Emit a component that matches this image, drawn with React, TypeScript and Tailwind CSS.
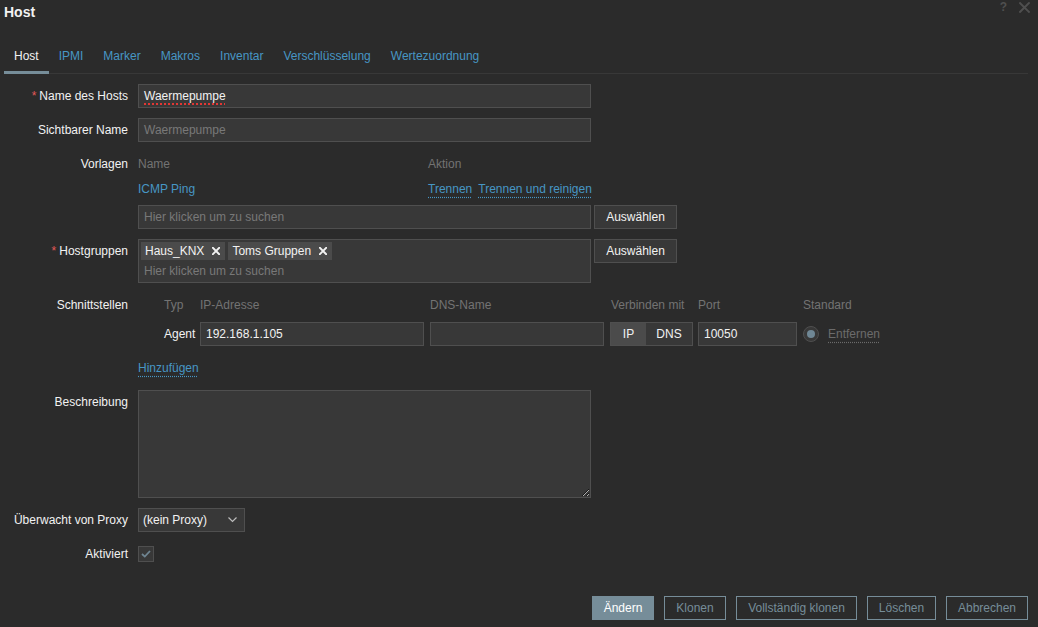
import React from "react";

const tabs = ["Host", "IPMI", "Marker", "Makros", "Inventar", "Verschlüsselung", "Wertezuordnung"];

const XIcon = ({ size = 7, stroke = 2, color = "#f2f2f2" }: { size?: number; stroke?: number; color?: string }) => (
  <svg width={size} height={size} viewBox="0 0 10 10" fill="none">
    <path d="M1 1L9 9M9 1L1 9" stroke={color} strokeWidth={stroke} strokeLinecap="square" />
  </svg>
);

const Label: React.FC<{ text?: string; required?: boolean; h?: string }> = ({ text, required, h = "h-[24px] leading-[24px]" }) => (
  <div className={`w-[124px] shrink-0 text-right text-[#f2f2f2] ${h}`}>
    {required && <span className="text-[#e45959] mr-[3px]">*</span>}
    {text}
  </div>
);

const Row: React.FC<{ children: React.ReactNode; className?: string }> = ({ children, className = "" }) => (
  <div className={`flex gap-[10px] ${className}`}>{children}</div>
);

const TextBox: React.FC<{ value: string; className?: string; muted?: boolean; spell?: boolean }> = ({ value, className = "", muted, spell }) => (
  <div
    className={`h-[24px] bg-[#383838] border border-[#4f4f4f] px-[5px] leading-[22px] ${muted ? "text-[#787878]" : "text-[#f2f2f2]"} ${className}`}
  >
    {spell ? <span className="underline decoration-dotted decoration-[#e33734] decoration-[1.5px] underline-offset-[3px]">{value}</span> : value}
  </div>
);

const GreyButton: React.FC<{ children: React.ReactNode }> = ({ children }) => (
  <button className="h-[24px] px-[10px] bg-[#383838] border border-[#4f4f4f] text-[#f2f2f2] leading-[22px] w-[83px]">{children}</button>
);

const Link: React.FC<{ children: React.ReactNode; dotted?: boolean; className?: string }> = ({ children, dotted = true, className = "" }) => (
  <span className={`text-[#4796c4] ${dotted ? "underline decoration-dotted decoration-[#4796c4] underline-offset-[4px]" : ""} ${className}`}>
    {children}
  </span>
);

const Chip: React.FC<{ name: string }> = ({ name }) => (
  <div className="h-[18px] bg-[#4b4b4b] flex items-center pl-[4px] pr-[5px] gap-[8px] text-[#f2f2f2]">
    <span>{name}</span>
    <XIcon size={8} stroke={2.4} />
  </div>
);

export default function App() {
  return (
    <div
      className="w-[1038px] h-[627px] bg-[#2b2b2b] text-[12px] pl-[4px] pr-[10px] overflow-hidden"
      style={{ fontFamily: '"Liberation Sans", Arial, sans-serif' }}
    >
      {/* header */}
      <div className="flex justify-between items-start h-[24px]">
        <h1 className="text-[14px] font-bold text-[#f2f2f2] leading-[24px]">Host</h1>
        <div className="flex items-center gap-[12px] mr-[-2px] text-[#4f4f4f]">
          <span className="font-bold text-[12px] leading-[14px]">?</span>
          <XIcon size={11} stroke={1.8} color="#4f4f4f" />
        </div>
      </div>

      {/* tabs */}
      <div className="mt-[20px] h-[30px] flex border-b border-[#383838]">
        {tabs.map((t, i) => (
          <div
            key={t}
            className={`h-[30px] -mb-px px-[10px] flex items-center pb-[3px] border-b-[3px] ${
              i === 0 ? "border-[#768d99] text-[#f2f2f2]" : "border-transparent text-[#4796c4]"
            }`}
          >
            {t}
          </div>
        ))}
      </div>

      {/* form */}
      <div className="mt-[10px] flex flex-col gap-[10px]">
        <Row>
          <Label text="Name des Hosts" required />
          <TextBox value="Waermepumpe" className="w-[453px]" spell />
        </Row>
        <Row>
          <Label text="Sichtbarer Name" />
          <TextBox value="Waermepumpe" className="w-[453px]" muted />
        </Row>

        <Row>
          <Label text="Vorlagen" h="h-[23px] leading-[24px]" />
          <div className="flex flex-col">
            <div className="flex h-[23px] leading-[24px] text-[#737373]">
              <div className="w-[290px]">Name</div>
              <div>Aktion</div>
            </div>
            <div className="flex h-[25px] leading-[28px]">
              <div className="w-[290px]">
                <Link dotted={false}>ICMP Ping</Link>
              </div>
              <div className="flex gap-[6px]">
                <Link>Trennen</Link>
                <Link>Trennen und reinigen</Link>
              </div>
            </div>
            <div className="mt-[5px] flex gap-[3px]">
              <TextBox value="Hier klicken um zu suchen" className="w-[453px]" muted />
              <GreyButton>Auswählen</GreyButton>
            </div>
          </div>
        </Row>

        <Row>
          <Label text="Hostgruppen" required />
          <div className="flex gap-[3px] items-start">
            <div className="w-[453px] h-[44px] bg-[#383838] border border-[#4f4f4f] p-[2px]">
              <div className="flex gap-[3px]">
                <Chip name="Haus_KNX" />
                <Chip name="Toms Gruppen" />
              </div>
              <div className="mt-[2px] h-[18px] leading-[18px] pl-[3px] text-[#787878]">Hier klicken um zu suchen</div>
            </div>
            <GreyButton>Auswählen</GreyButton>
          </div>
        </Row>

        <Row>
          <Label text="Schnittstellen" h="h-[22px] leading-[24px]" />
          <div className="flex flex-col">
            <div className="flex h-[22px] leading-[24px] text-[#737373]">
              <div className="w-[62px] pl-[26px]">Typ</div>
              <div className="w-[230px]">IP-Adresse</div>
              <div className="w-[180px]">DNS-Name</div>
              <div className="w-[88px] pl-[1px]">Verbinden mit</div>
              <div className="w-[105px]">Port</div>
              <div>Standard</div>
            </div>
            <div className="mt-[7px] flex items-center h-[24px]">
              <div className="w-[62px] pl-[26px] text-[#f2f2f2]">Agent</div>
              <TextBox value="192.168.1.105" className="w-[224px]" />
              <TextBox value="" className="w-[174px] ml-[6px]" />
              <div className="ml-[6px] w-[83px] h-[24px] flex border border-[#4f4f4f] text-[#f2f2f2]">
                <div className="w-[35px] bg-[#4b4b4b] flex items-center justify-center">IP</div>
                <div className="flex-1 bg-[#383838] flex items-center justify-center">DNS</div>
              </div>
              <TextBox value="10050" className="w-[99px] ml-[5px]" />
              <div className="ml-[6px] w-[16px] h-[16px] rounded-full border border-[#4f4f4f] bg-[#383838] flex items-center justify-center">
                <div className="w-[8px] h-[8px] rounded-full bg-[#6f8795]" />
              </div>
              <span className="ml-[9px] text-[#6b6b6b] underline decoration-dotted decoration-[#6b6b6b] underline-offset-[4px]">Entfernen</span>
            </div>
          </div>
        </Row>

        <Row>
          <Label />
          <div className="h-[24px] leading-[24px]">
            <Link>Hinzufügen</Link>
          </div>
        </Row>

        <Row>
          <Label text="Beschreibung" />
          <textarea className="w-[453px] h-[108px] bg-[#383838] border border-[#4f4f4f] text-[#f2f2f2] outline-none" />
        </Row>

        <Row>
          <Label text="Überwacht von Proxy" />
          <div className="w-[107px] h-[24px] bg-[#383838] border border-[#4f4f4f] flex items-center justify-between pl-[4px] pr-[7px] text-[#f2f2f2]">
            <span>(kein Proxy)</span>
            <svg width="9" height="6" viewBox="0 0 9 6" fill="none">
              <path d="M0.5 0.5L4.5 4.5L8.5 0.5" stroke="#bcbcbc" strokeWidth="1.2" />
            </svg>
          </div>
        </Row>

        <Row className="items-center">
          <Label text="Aktiviert" />
          <div className="w-[16px] h-[16px] bg-[#383838] border border-[#4f4f4f] flex items-center justify-center">
            <svg width="10" height="8" viewBox="0 0 10 8" fill="none">
              <path d="M1 4L3.8 6.6L9 1" stroke="#6f8592" strokeWidth="1.8" />
            </svg>
          </div>
        </Row>
      </div>

      {/* footer */}
      <div className="mt-[30px] flex justify-end gap-[10px]">
        <button className="h-[24px] w-[62px] bg-[#768d99] border border-[#768d99] text-white">Ändern</button>
        <button className="h-[24px] w-[62px] border border-[#768d99] text-[#768d99]">Klonen</button>
        <button className="h-[24px] w-[121px] border border-[#768d99] text-[#768d99]">Vollständig klonen</button>
        <button className="h-[24px] w-[69px] border border-[#768d99] text-[#768d99]">Löschen</button>
        <button className="h-[24px] w-[82px] border border-[#768d99] text-[#768d99]">Abbrechen</button>
      </div>
    </div>
  );
}
